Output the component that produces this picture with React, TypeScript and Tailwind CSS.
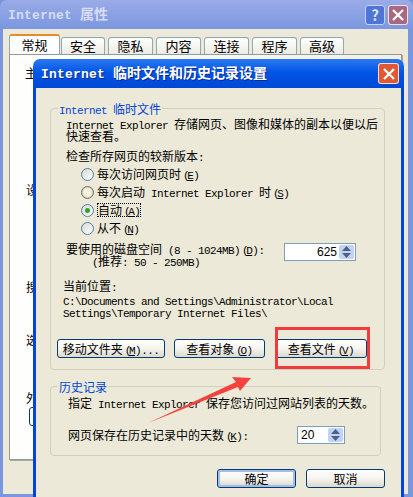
import type { ReactNode } from 'react';

// Latin runs sit at half the CJK width, like SimSun
function T({ children, bold }: { children: string; bold?: boolean }) {
  const runs = children.match(/[\x20-\x7e]+|[^\x20-\x7e]+/g) ?? [];
  return (
    <>
      {runs.map((run, i) =>
        /^[\x20-\x7e]/.test(run) ? (
          <span
            key={i}
            className={
              bold
                ? "whitespace-pre font-['Liberation_Mono'] text-[13px] tracking-[0.2px]"
                : "whitespace-pre font-['Liberation_Mono'] text-[11px] tracking-[-0.6px]"
            }
          >
            {run}
          </span>
        ) : (
          <span key={i}>{run}</span>
        ),
      )}
    </>
  );
}

// accelerator key: narrow parens round an underlined letter
function Hot({ k }: { k: string }) {
  return (
    <span className="ml-[2px] whitespace-pre font-['Liberation_Mono'] text-[11px] tracking-[-0.6px]">
      <span className="tracking-[-2.4px]">(</span>
      <u>{k}</u>
      <span className="tracking-[-2.4px]">)</span>
      <span className="ml-[2px]" />
    </span>
  );
}

// one fixed 12px text line, mixed fonts must not stretch it
function Line({ className, children }: { className?: string; children: ReactNode }) {
  return <div className={`h-[12px] whitespace-nowrap ${className ?? ''}`}>{children}</div>;
}

function Radio({ state, children }: { state?: 'hover' | 'on'; children: ReactNode }) {
  return (
    <div className="flex h-[18px] items-center gap-[3px] pl-[30px]">
      <span
        className={`flex h-[13px] w-[13px] items-center justify-center rounded-full border border-[#4f7fa6] ${
          state === 'hover' ? 'bg-[#f8c66a]' : 'bg-linear-to-br from-[#d9d8cf] to-white'
        }`}
      >
        {state === 'hover' && <span className="h-[9px] w-[9px] rounded-full bg-[#f4f1e6]" />}
        {state === 'on' && <span className="h-[5px] w-[5px] rounded-full bg-[#2fa32f]" />}
      </span>
      {children}
    </div>
  );
}

function XpButton({ className, children, primary }: { className: string; children: ReactNode; primary?: boolean }) {
  return (
    <div
      className={`flex h-[19px] items-center justify-center whitespace-nowrap rounded-[3px] border border-[#003c74] bg-linear-to-b from-white via-[#f5f4ee] to-[#dcd8cc] text-black ${
        primary ? 'shadow-[inset_0_0_0_2px_#a3bdea]' : ''
      } ${className}`}
    >
      {children}
    </div>
  );
}

function Spinner({ value, className, right }: { value: string; className: string; right?: boolean }) {
  return (
    <div className={`flex h-[18px] shrink-0 items-center border border-[#7f9db9] bg-white p-px ${className}`}>
      <span className={`flex-1 px-[2px] text-[12px] font-['Liberation_Sans'] ${right ? 'text-right' : ''}`}>{value}</span>
      <span className="flex h-full w-[15px] flex-col items-center justify-center gap-[2px] rounded-[2px] bg-[#c3d3f5]">
        <svg width="9" height="5" viewBox="0 0 9 5">
          <path d="M4.5 0 9 5H0z" fill="#4d6185" />
        </svg>
        <svg width="9" height="5" viewBox="0 0 9 5">
          <path d="M0 0h9L4.5 5z" fill="#4d6185" />
        </svg>
      </span>
    </div>
  );
}

function Close({ className }: { className: string }) {
  return (
    <div className={`flex items-center justify-center rounded-[3px] border border-white/80 ${className}`}>
      <svg width="12" height="12" viewBox="0 0 12 12">
        <path d="M1 1 11 11M11 1 1 11" stroke="#fff" strokeWidth="2.2" />
      </svg>
    </div>
  );
}

const tabs = [
  { label: '安全', w: 'w-[44px]', gap: 'ml-px' },
  { label: '隐私', w: 'w-[45px]', gap: 'ml-[3px]' },
  { label: '内容', w: 'w-[45px]', gap: 'ml-[3px]' },
  { label: '连接', w: 'w-[45px]', gap: 'ml-[3px]' },
  { label: '程序', w: 'w-[45px]', gap: 'ml-[3px]' },
  { label: '高级', w: 'w-[44px]', gap: 'ml-[3px]' },
];

export default function App() {
  return (
    <div className="relative h-[497px] w-[413px] overflow-hidden bg-[#7a93dd] font-['Noto_Sans_CJK_SC',sans-serif] text-[12px] leading-[12px] text-black">
      {/* Properties window behind */}
      <div className="flex h-[497px] flex-col rounded-t-[7px] bg-linear-to-b from-[#9aabe8] from-0% to-[#7a96df] to-[6%] px-[3px] pb-[3px] pr-[5px]">
        <div className="flex h-[29px] shrink-0 items-center justify-between pl-[5px] pr-0">
          <span className="text-[14px] font-bold text-[#d5dcf5]">
            <T bold>Internet 属性</T>
          </span>
          <div className="flex gap-[3px]">
            <div className="flex h-[20px] w-[20px] items-center justify-center rounded-[3px] border border-[#c6d2f2] bg-[#4f75d6] text-[15px] font-bold text-[#dfe6f8]">
              ?
            </div>
            <Close className="h-[20px] w-[20px] bg-[#a8687f]" />
          </div>
        </div>
        <div className="flex flex-1 flex-col bg-[#ece9d8] px-[6px] pb-[34px] pt-[6px]">
          <div className="flex h-[19px] shrink-0 items-end">
            <div className="flex h-[20px] w-[51px] items-center justify-center rounded-t-[3px] border-x border-[#91a7b4] border-t-2 border-t-[#e68b2c] bg-white text-[13px]">
              常规
            </div>
            {tabs.map((tab) => (
              <div
                key={tab.label}
                className={`flex h-[17px] items-center justify-center rounded-t-[3px] border-x border-t border-[#91a7b4] bg-linear-to-b from-white to-[#ecebe3] text-[13px] ${tab.w} ${tab.gap}`}
              >
                {tab.label}
              </div>
            ))}
          </div>
          <div className="relative flex-1 border border-[#919b9c] bg-linear-to-r from-white to-[#f1efe6] shadow-[1px_1px_0_#aca899]">
            <span className="absolute left-[15px] top-[12px]">主页</span>
            <span className="absolute left-[16px] top-[129px]">设置</span>
            <span className="absolute left-[16px] top-[226px]">搜索</span>
            <span className="absolute left-[16px] top-[279px]">选项卡</span>
            <span className="absolute left-[16px] top-[337px]">外观</span>
            <div className="absolute left-[19px] top-[352px] h-[19px] w-[60px] rounded-[3px] border border-[#003c74] bg-white" />
          </div>
        </div>
      </div>

      {/* Temp files dialog on top */}
      <div className="absolute left-[33px] top-[59px] flex h-[445px] w-[371px] flex-col rounded-t-[7px] bg-linear-to-b from-[#2a78f0] from-0% via-[#0055e5] via-[3%] to-[#0046d5] to-[7%] px-[3px]">
        <div className="flex h-[29px] shrink-0 items-center justify-between pl-[5px] pr-[2px]">
          <span className="text-[14px] font-bold text-white [text-shadow:1px_1px_0_#0a2a8c]">
            <T bold>Internet 临时文件和历史记录设置</T>
          </span>
          <Close className="h-[21px] w-[21px] bg-[#df5a33]" />
        </div>
        <div className="flex-1 bg-[#ece9d8] pl-[14px] pr-[16px] pt-[20px]">
          <div className="relative h-[262px] w-[335px] rounded-[4px] border border-[#d0d0bf] pt-[9px]">
            <span className="absolute -top-[6px] left-[7px] h-[12px] whitespace-nowrap bg-[#ece9d8] px-px text-[#0046d5]">
              <T>Internet 临时文件</T>
            </span>
            <div className="pl-[15px]">
              <Line><T>Internet Explorer 存储网页、图像和媒体的副本以便以后</T></Line>
              <Line>快速查看。</Line>
              <Line className="mt-[8px]"><T>检查所存网页的较新版本:</T></Line>
            </div>
            <div className="mt-[3px]">
              <Radio>
                <Line>每次访问网页时<Hot k="E" /></Line>
              </Radio>
              <Radio state="hover">
                <Line><T>每次启动 Internet Explorer 时</T><Hot k="S" /></Line>
              </Radio>
              <Radio state="on">
                <span className="flex h-[14px] items-center border border-dotted border-black"><Line><T>自动</T><Hot k="A" /></Line></span>
              </Radio>
              <Radio>
                <Line>从不<Hot k="N" /></Line>
              </Radio>
            </div>
            <div className="mt-[6px] flex justify-between pl-[15px] pr-[28px]">
              <div>
                <Line><T>要使用的磁盘空间 (8 - 1024MB)</T><Hot k="D" /><T>:</T></Line>
                <Line className="pl-[26px]"><T>(推荐: 50 - 250MB)</T></Line>
              </div>
              <Spinner value="625" right className="w-[72px]" />
            </div>
            <div className="mt-[13px] pl-[12px]">
              <Line className="mb-[2px]"><T>当前位置:</T></Line>
              <Line><T>{'C:\\Documents and Settings\\Administrator\\Local'}</T></Line>
              <Line><T>{'Settings\\Temporary Internet Files\\'}</T></Line>
            </div>
            <div className="mt-[21px] flex pl-[6px]">
              <XpButton className="w-[108px]"><Line><T>移动文件夹</T><Hot k="M" /><T>...</T></Line></XpButton>
              <XpButton className="ml-[9px] w-[91px]"><Line><T>查看对象</T><Hot k="O" /></Line></XpButton>
              <XpButton className="ml-[10px] w-[92px]"><Line><T>查看文件</T><Hot k="V" /></Line></XpButton>
            </div>
          </div>
          <div className="relative mt-[16px] h-[70px] w-[331px] rounded-[4px] border border-[#d0d0bf] pl-[17px] pt-[10px]">
            <span className="absolute -top-[6px] left-[7px] h-[12px] bg-[#ece9d8] px-px text-[#0046d5]">历史记录</span>
            <Line><T>指定 Internet Explorer 保存您访问过网站列表的天数。</T></Line>
            <div className="mt-[17px] flex items-center">
              <Line className="w-[229px]"><T>网页保存在历史记录中的天数</T><Hot k="K" /><T>:</T></Line>
              <Spinner value="20" className="w-[48px]" />
            </div>
          </div>
          <div className="mt-[13px] flex pl-[167px]">
            <XpButton primary className="w-[79px]">确定</XpButton>
            <XpButton className="ml-[10px] w-[79px]">取消</XpButton>
          </div>
        </div>
      </div>

      {/* Red annotation drawn over the screenshot */}
      <div className="absolute left-[275px] top-[327px] h-[42px] w-[95px] border-[3px] border-[#f43b3b]" />
      <svg className="absolute left-0 top-0" width="413" height="497" viewBox="0 0 413 497">
        <path d="M148 423 236 382 232 377 251 378 240 391 238 387Z" fill="#f4433f" />
      </svg>
    </div>
  );
}
